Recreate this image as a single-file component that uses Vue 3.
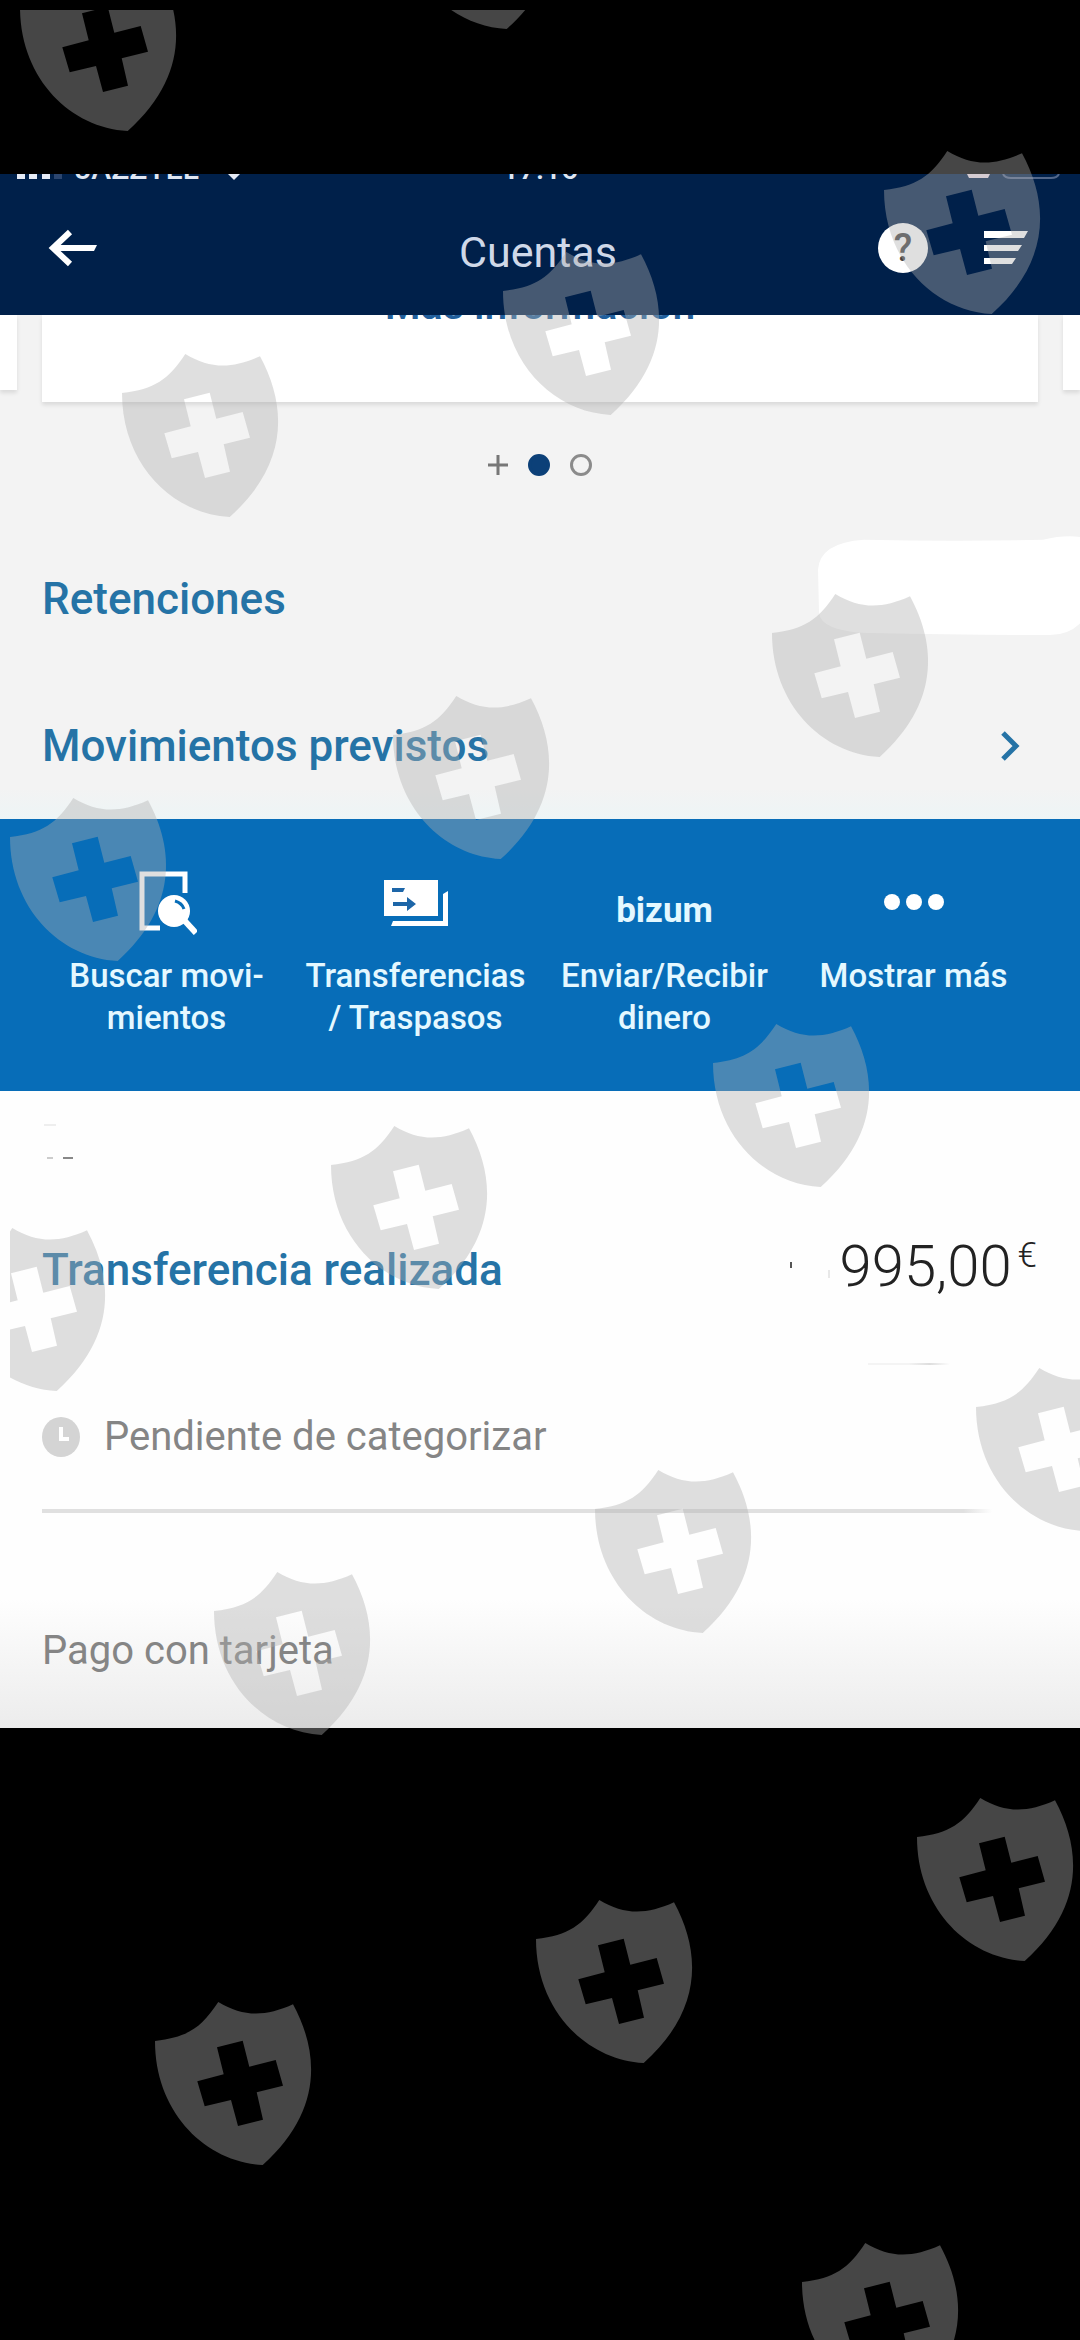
<script setup>
const shields = [
  [20, -32], [399, -134],
  [122, 354], [503, 252], [884, 151],
  [10, 798], [393, 696], [772, 594],
  [-51, 1228], [331, 1126], [713, 1024],
  [214, 1572], [595, 1470], [976, 1368],
  [155, 2002], [536, 1900], [917, 1798],
  [802, 2243],
]
</script>

<template>
  <div class="screen">
    <div class="phone">
      <div class="status">
        <svg class="signal" viewBox="0 0 46 6" aria-hidden="true">
          <path d="M0 0h8v5H0zM12 0h8v5h-8zM25 0h8v5h-8z" fill="#e6ebf5" />
          <path d="M37 0h8v5h-8z" fill="#2c466f" />
        </svg>
        <span class="carrier">JAZZTEL</span>
        <svg class="wifi" viewBox="0 0 14 6" aria-hidden="true"><path d="M1 0h12L7 6z" fill="#e6ebf5" /></svg>
        <span class="time">17:16</span>
        <svg class="battery" viewBox="0 0 94 6" aria-hidden="true">
          <path d="M1 0h23l-2 4H3z" fill="#efdfea" />
          <path d="M37 0q2 4 8 4h40q6 0 8-4" fill="none" stroke="#52678a" stroke-width="2" />
        </svg>
      </div>

      <header class="bar">
        <button class="back" aria-label="Volver">
          <svg width="50" height="38" viewBox="0 0 50 38" aria-hidden="true">
            <path d="M22 3 5 19l17 16" fill="none" stroke="#fff" stroke-width="6" />
            <path d="M5 16h44l-3 6H5z" fill="#fff" />
          </svg>
        </button>
        <h1>Cuentas</h1>
        <div class="tools">
          <button class="help" aria-label="Ayuda">?</button>
          <button class="menu" aria-label="Menú">
            <svg width="44" height="34" viewBox="0 0 44 34" aria-hidden="true">
              <path d="M0 0h44l-4 7H0zM0 14h38l-4 6H0zM0 27h32l-4 6H0z" fill="#fff" />
            </svg>
          </button>
        </div>
      </header>

      <main>
        <section class="summary">
          <div class="cards">
            <div class="side left"></div>
            <div class="card"><a href="#info">Más información</a></div>
            <div class="side right"></div>
          </div>
          <div class="pager">
            <svg width="20" height="20" viewBox="0 0 20 20" aria-hidden="true">
              <path d="M10 0v20M0 10h20" stroke="#777" stroke-width="3" />
            </svg>
            <span class="dot on"></span>
            <span class="dot"></span>
          </div>
          <a class="row" href="#retenciones">
            <span>Retenciones</span>
            <svg class="blank" viewBox="0 0 262 104" preserveAspectRatio="none" aria-hidden="true">
              <path d="M46 5 Q140 7 225 5 Q245 0 262 2 V92 Q250 104 232 104 Q150 104 50 102 Q2 100 1 80 L0 36 Q2 8 46 5Z" fill="#fff" />
            </svg>
          </a>
          <a class="row" href="#previstos">
            <span>Movimientos previstos</span>
            <svg class="chevron" width="20" height="30" viewBox="0 0 20 30" aria-hidden="true">
              <path d="M3 2l13 13L3 28" fill="none" stroke="#2573a6" stroke-width="5" />
            </svg>
          </a>
        </section>

        <nav class="actions">
          <button>
            <span class="icon">
              <svg width="60" height="64" viewBox="-2 0 60 64" aria-hidden="true">
                <path d="M46 22V3H3v54h18" fill="none" stroke="#fff" stroke-width="5" />
                <path d="M45 49l12 13" stroke="#fff" stroke-width="6" />
                <circle cx="35" cy="40" r="16" fill="#fff" />
                <path d="M36 30q7 2 9 8" fill="none" stroke="#076db8" stroke-width="3" />
              </svg>
            </span>
            <span>Buscar movi-<br />mientos</span>
          </button>
          <button>
            <span class="icon">
              <svg width="64" height="64" viewBox="0 0 64 64" aria-hidden="true">
                <path d="M0 9h54v36H0z" fill="#fff" />
                <path d="M64 20v35H7l2-5h50V23z" fill="#fff" />
                <path d="M8 17h13l-2 4H8zM9 31h14v-5l9 7-9 7v-5H9z" fill="#1d66a8" />
              </svg>
            </span>
            <span>Transferencias<br />/ Traspasos</span>
          </button>
          <button>
            <span class="icon bizum">bizum</span>
            <span>Enviar/Recibir<br />dinero</span>
          </button>
          <button>
            <span class="icon">
              <svg width="60" height="64" viewBox="0 0 60 64" aria-hidden="true">
                <g fill="#fff"><circle cx="8" cy="31" r="8" /><circle cx="30" cy="31" r="8" /><circle cx="52" cy="31" r="8" /></g>
              </svg>
            </span>
            <span>Mostrar más</span>
          </button>
        </nav>

        <section class="moves">
          <svg class="date" width="36" height="36" viewBox="0 0 36 36" aria-hidden="true">
            <path d="M2 2h12" stroke="#eee" stroke-width="2" />
            <path d="M5 35h6" stroke="#ccc" stroke-width="2" />
            <path d="M21 35h10" stroke="#888" stroke-width="2" />
          </svg>
          <article class="move">
            <a href="#transferencia">Transferencia realizada</a>
            <p class="amount">
              <svg width="42" height="24" viewBox="0 0 42 24" aria-hidden="true">
                <path d="M1 8v6" stroke="#555" stroke-width="2" />
                <path d="M39 16v8" stroke="#e8e8e8" stroke-width="2" />
              </svg>
              <span>995,00</span><small>€</small>
            </p>
          </article>
          <div class="rest"></div>
          <p class="pending">
            <svg width="38" height="40" viewBox="0 0 38 40" aria-hidden="true">
              <ellipse cx="19" cy="20" rx="19" ry="20" fill="#d4d4d4" />
              <path d="M19 10v12h8" fill="none" stroke="#fff" stroke-width="4" />
            </svg>
            Pendiente de categorizar
          </p>
          <div class="rule"></div>
          <p class="fade">Pago con tarjeta</p>
        </section>
      </main>
    </div>

    <svg class="overlay" viewBox="0 0 1080 2340" aria-hidden="true">
      <defs>
        <clipPath id="area"><rect x="10" y="10" width="1070" height="2330" /></clipPath>
        <path
          id="shield"
          fill-rule="evenodd"
          d="M0 39C33 35 46 26 63.300 0C88 15 110 15 138 2.300C165 52 167 110 107.700 163C50 160 0 110 0 39ZM62 45.300L68.700 72.300L42.300 79.300L49.700 104.300L76 98L83 124L108 117.700L101.700 90.300L128 83.700L120.700 58L94.300 64.700L87.700 38.700Z"
        />
      </defs>
      <g clip-path="url(#area)">
        <use v-for="([x, y], i) in shields" :key="i" href="#shield" :x="x" :y="y" />
      </g>
    </svg>
  </div>
</template>

<style>
body {
  margin: 0;
  background: #000;
}
</style>

<style scoped>
.screen {
  position: relative;
  min-height: 100vh;
  box-sizing: border-box;
  padding-top: 174px;
  overflow: hidden;
  background: #000;
  font-family: Roboto, "Noto Sans", sans-serif;
}
button {
  border: 0;
  padding: 0;
  background: none;
  font: inherit;
  color: inherit;
}
a {
  color: inherit;
  text-decoration: none;
}
p,
h1 {
  margin: 0;
  font-weight: 400;
}
svg {
  display: block;
  flex: none;
}
.overlay {
  position: absolute;
  top: 0;
  left: 0;
  width: 100%;
  fill: rgba(176, 176, 176, 0.4);
  pointer-events: none;
}
.status {
  position: relative;
  display: flex;
  align-items: flex-end;
  height: 6px;
  padding: 0 20px 0 17px;
  overflow: hidden;
  background: #00204a;
  color: #dfe6f2;
  font-size: 30px;
  font-weight: 500;
  line-height: 22px;
}
.signal {
  width: 46px;
  height: 6px;
}
.carrier {
  margin-left: 12px;
}
.wifi {
  width: 14px;
  margin-left: 28px;
}
.time {
  position: absolute;
  left: 0;
  right: 0;
  bottom: 0;
  text-align: center;
}
.battery {
  width: 94px;
  margin-left: auto;
}
.bar {
  display: grid;
  grid-template-columns: 1fr auto 1fr;
  align-items: center;
  height: 135px;
  padding: 0 52px 0 48px;
  background: #00204a;
  color: #fff;
}
.back {
  justify-self: start;
}
h1 {
  padding-top: 8px;
  font-size: 43px;
  line-height: 52px;
  color: #cfd8e8;
}
.tools {
  display: flex;
  align-items: center;
  justify-self: end;
  gap: 56px;
}
.help {
  width: 50px;
  height: 50px;
  border-radius: 50%;
  background: #fff;
  color: #444;
  font-size: 38px;
  font-weight: 500;
  line-height: 50px;
}
.summary {
  height: 504px;
  background: linear-gradient(#f3f3f3 94%, #edf5f6);
}
.cards {
  display: flex;
  justify-content: space-between;
  gap: 25px;
  height: 87px;
}
.side,
.card {
  background: #fff;
  box-shadow: 0 3px 4px rgba(0, 0, 0, 0.1);
}
.side {
  width: 17px;
  height: 75px;
}
.card {
  flex: 1;
  overflow: hidden;
  text-align: center;
  clip-path: inset(0 -8px -8px);
}
.card a {
  display: block;
  margin-top: -38px;
  color: #215f9c;
  font-size: 41px;
  font-weight: 500;
  line-height: 56px;
}
.pager {
  display: flex;
  align-items: center;
  justify-content: center;
  gap: 20px;
  height: 22px;
  padding: 52px 0 49px;
}
.dot {
  box-sizing: border-box;
  width: 22px;
  height: 22px;
  border: 3px solid #8b8b8b;
  border-radius: 50%;
}
.dot.on {
  border-color: #0c4078;
  background: #0c4078;
}
.row {
  display: flex;
  align-items: center;
  justify-content: space-between;
  height: 147px;
  padding-left: 42px;
  color: #2573a6;
  font-size: 44px;
  font-weight: 500;
}
.blank {
  width: 262px;
  height: 100px;
  margin-bottom: 28px;
}
.chevron {
  margin-right: 60px;
}
.actions {
  display: grid;
  grid-template-columns: repeat(4, 1fr);
  align-items: start;
  height: 272px;
  box-sizing: border-box;
  padding: 52px 42px 0;
  background: #076db8;
  color: #e4f8ff;
  text-align: center;
  font-size: 33px;
  font-weight: 500;
  line-height: 42px;
}
.icon {
  display: flex;
  justify-content: center;
  height: 64px;
  margin-bottom: 20px;
}
.bizum {
  box-sizing: border-box;
  align-items: center;
  padding-top: 16px;
  font-size: 35px;
  font-weight: 700;
}
.moves {
  background: #fefefe;
}
.date {
  padding: 32px 0 0 42px;
}
.move {
  display: flex;
  align-items: center;
  justify-content: space-between;
  height: 64px;
  padding: 79px 43px 25px 42px;
  color: #2573a6;
  font-size: 44px;
  font-weight: 500;
  line-height: 64px;
}
.amount {
  display: flex;
  align-items: center;
  margin-bottom: 8px;
  color: #222;
  font-size: 58px;
  font-weight: 300;
}
.amount span {
  margin-left: 8px;
}
.amount small {
  margin: 0 0 20px 6px;
  font-size: 35px;
  line-height: 44px;
}
.rest {
  width: 82px;
  height: 2px;
  margin: 36px 130px 0 auto;
  background: linear-gradient(90deg, #f4f4f4 50%, #ddd 75%, #fefefe);
}
.pending {
  display: flex;
  align-items: center;
  gap: 24px;
  padding: 46px 42px 0;
  color: #858585;
  font-size: 40px;
  line-height: 52px;
}
.rule {
  height: 4px;
  margin: 46px 88px 0 42px;
  background: linear-gradient(90deg, #e0e0e0 97%, #fefefe);
}
.fade {
  padding: 112px 42px 51px;
  background: linear-gradient(#fefefe 40%, #ececec);
  color: #858585;
  font-size: 40px;
  line-height: 52px;
}
</style>
